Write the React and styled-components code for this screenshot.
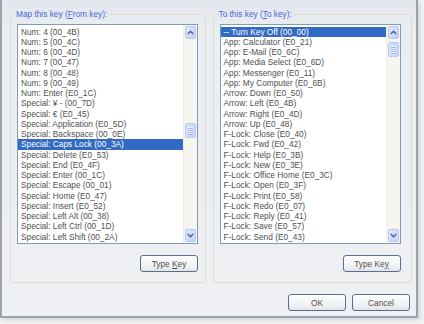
import styled, { createGlobalStyle } from 'styled-components'

const GlobalStyle = createGlobalStyle`
  html, body {
    margin: 0;
    padding: 0;
    background: #f2f3f5;
  }
  body {
    font-family: "Liberation Sans", Arial, sans-serif;
  }
`

const fromKeys = [
  'Num: 4 (00_4B)',
  'Num: 5 (00_4C)',
  'Num: 6 (00_4D)',
  'Num: 7 (00_47)',
  'Num: 8 (00_48)',
  'Num: 9 (00_49)',
  'Num: Enter (E0_1C)',
  'Special: ¥ - (00_7D)',
  'Special: € (E0_45)',
  'Special: Application (E0_5D)',
  'Special: Backspace (00_0E)',
  'Special: Caps Lock (00_3A)',
  'Special: Delete (E0_53)',
  'Special: End (E0_4F)',
  'Special: Enter (00_1C)',
  'Special: Escape (00_01)',
  'Special: Home (E0_47)',
  'Special: Insert (E0_52)',
  'Special: Left Alt (00_38)',
  'Special: Left Ctrl (00_1D)',
  'Special: Left Shift (00_2A)',
]

const toKeys = [
  '-- Turn Key Off (00_00)',
  'App: Calculator (E0_21)',
  'App: E-Mail (E0_6C)',
  'App: Media Select (E0_6D)',
  'App: Messenger (E0_11)',
  'App: My Computer (E0_6B)',
  'Arrow: Down (E0_50)',
  'Arrow: Left (E0_4B)',
  'Arrow: Right (E0_4D)',
  'Arrow: Up (E0_48)',
  'F-Lock: Close (E0_40)',
  'F-Lock: Fwd (E0_42)',
  'F-Lock: Help (E0_3B)',
  'F-Lock: New (E0_3E)',
  'F-Lock: Office Home (E0_3C)',
  'F-Lock: Open (E0_3F)',
  'F-Lock: Print (E0_58)',
  'F-Lock: Redo (E0_07)',
  'F-Lock: Reply (E0_41)',
  'F-Lock: Save (E0_57)',
  'F-Lock: Send (E0_43)',
]

function Chevron({ down }) {
  return (
    <svg width="7" height="5" viewBox="0 0 7 5">
      <polyline
        points={down ? '0.8,1 3.5,3.8 6.2,1' : '0.8,4 3.5,1.2 6.2,4'}
        fill="none"
        stroke="#4d6185"
        strokeWidth="1.4"
      />
    </svg>
  )
}

function KeyList({ items, selected, thumbTop }) {
  return (
    <ListBox>
      <Items>
        {items.map((item, i) => (
          <Item key={item} $selected={i === selected}>
            {item}
          </Item>
        ))}
      </Items>
      <ScrollBar>
        <ArrowButton>
          <Chevron />
        </ArrowButton>
        <Track>
          <Thumb style={{ marginTop: thumbTop }}>
            <Grip />
            <Grip />
            <Grip />
            <Grip />
          </Thumb>
        </Track>
        <ArrowButton>
          <Chevron down />
        </ArrowButton>
      </ScrollBar>
    </ListBox>
  )
}

export default function App() {
  return (
    <>
      <GlobalStyle />
      <Frame>
        <Dialog>
          <Groups>
            <GroupBox $width={196}>
              <Legend>
                Map this key (<u>F</u>rom key):
              </Legend>
              <KeyList items={fromKeys} selected={11} thumbTop={83} />
              <ButtonRow>
                <Button>
                  Type <u>K</u>ey
                </Button>
              </ButtonRow>
            </GroupBox>
            <GroupBox $width={200}>
              <Legend>
                To this key (<u>T</u>o key):
              </Legend>
              <KeyList items={toKeys} selected={0} thumbTop={2} />
              <ButtonRow $pad={1}>
                <Button>
                  Type Ke<u>y</u>
                </Button>
              </ButtonRow>
            </GroupBox>
          </Groups>
          <Footer>
            <Button>OK</Button>
            <Button>Cancel</Button>
          </Footer>
        </Dialog>
      </Frame>
    </>
  )
}

const Frame = styled.div`
  width: 424px;
  height: 324px;
  overflow: hidden;
`

const Dialog = styled.div`
  width: 418px;
  height: 318px;
  box-sizing: border-box;
  border: 2px solid #9aa3ae;
  border-top: none;
  background: linear-gradient(#e3e8ee 0px, #eaedf1 30px, #eef0f3 100%);
  box-shadow: 2px 2px 4px rgba(60, 70, 90, 0.18);
  padding: 9px 4px 0 8px;
  display: flex;
  flex-direction: column;
`

const Groups = styled.div`
  display: flex;
  gap: 7px;
`

const GroupBox = styled.fieldset`
  margin: 0;
  width: ${(p) => p.$width}px;
  box-sizing: border-box;
  border: 1px solid #dcdccf;
  border-radius: 4px;
  padding: 0 6px 10px 6px;
  display: flex;
  flex-direction: column;
`

const Legend = styled.legend`
  padding: 0 2px 0 0;
  margin-left: -1px;
  font-size: 8.3px;
  line-height: 10px;
  color: #4668dc;
  u {
    text-decoration-thickness: 1px;
  }
`

const ListBox = styled.div`
  margin-top: 5px;
  width: 181px;
  height: 220px;
  box-sizing: border-box;
  border: 1px solid #7f9db9;
  background: #fff;
  display: flex;
`

const Items = styled.div`
  flex: 1;
  padding-top: 1.5px;
  overflow: hidden;
`

const Item = styled.div`
  height: 10.25px;
  line-height: 10.25px;
  padding-left: 3px;
  font-size: 8.3px;
  white-space: nowrap;
  color: ${(p) => (p.$selected ? '#fff' : '#505050')};
  background: ${(p) => (p.$selected ? '#316ac5' : 'transparent')};
`

const ScrollBar = styled.div`
  width: 13px;
  display: flex;
  flex-direction: column;
  background: #f6f5ef;
  border-left: 1px solid #efeee6;
`

const ArrowButton = styled.div`
  height: 13px;
  margin: 1px 1px;
  box-sizing: border-box;
  border: 1px solid #b7c9f0;
  border-radius: 2px;
  background: linear-gradient(135deg, #dde8fe, #c2d3fb);
  display: flex;
  align-items: center;
  justify-content: center;
`

const Track = styled.div`
  flex: 1;
`

const Thumb = styled.div`
  height: 15px;
  margin: 0 1px;
  box-sizing: border-box;
  border: 1px solid #b7c9f0;
  border-radius: 2px;
  background: linear-gradient(90deg, #d6e2fe, #c6d6fc);
  display: flex;
  flex-direction: column;
  align-items: center;
  justify-content: center;
  gap: 1px;
`

const Grip = styled.div`
  width: 5px;
  height: 1px;
  background: #eef3ff;
  box-shadow: 0 1px 0 #9fb5ea;
`

const ButtonRow = styled.div`
  display: flex;
  justify-content: flex-end;
  margin-top: 11px;
  padding-right: ${(p) => p.$pad || 0}px;
  width: 181px;
`

const Button = styled.button`
  width: 58px;
  height: 17px;
  padding: 0;
  box-sizing: border-box;
  border: 1px solid #5a6d8f;
  border-radius: 3px;
  background: linear-gradient(#fdfdfd, #f0f1f3 70%, #e2e4e9);
  font-family: "Liberation Sans", Arial, sans-serif;
  font-size: 8.3px;
  color: #505050;
  u {
    text-decoration-thickness: 1px;
  }
`

const Footer = styled.div`
  display: flex;
  justify-content: flex-end;
  gap: 6px;
  margin-top: 11px;
  padding-right: 2px;
`
